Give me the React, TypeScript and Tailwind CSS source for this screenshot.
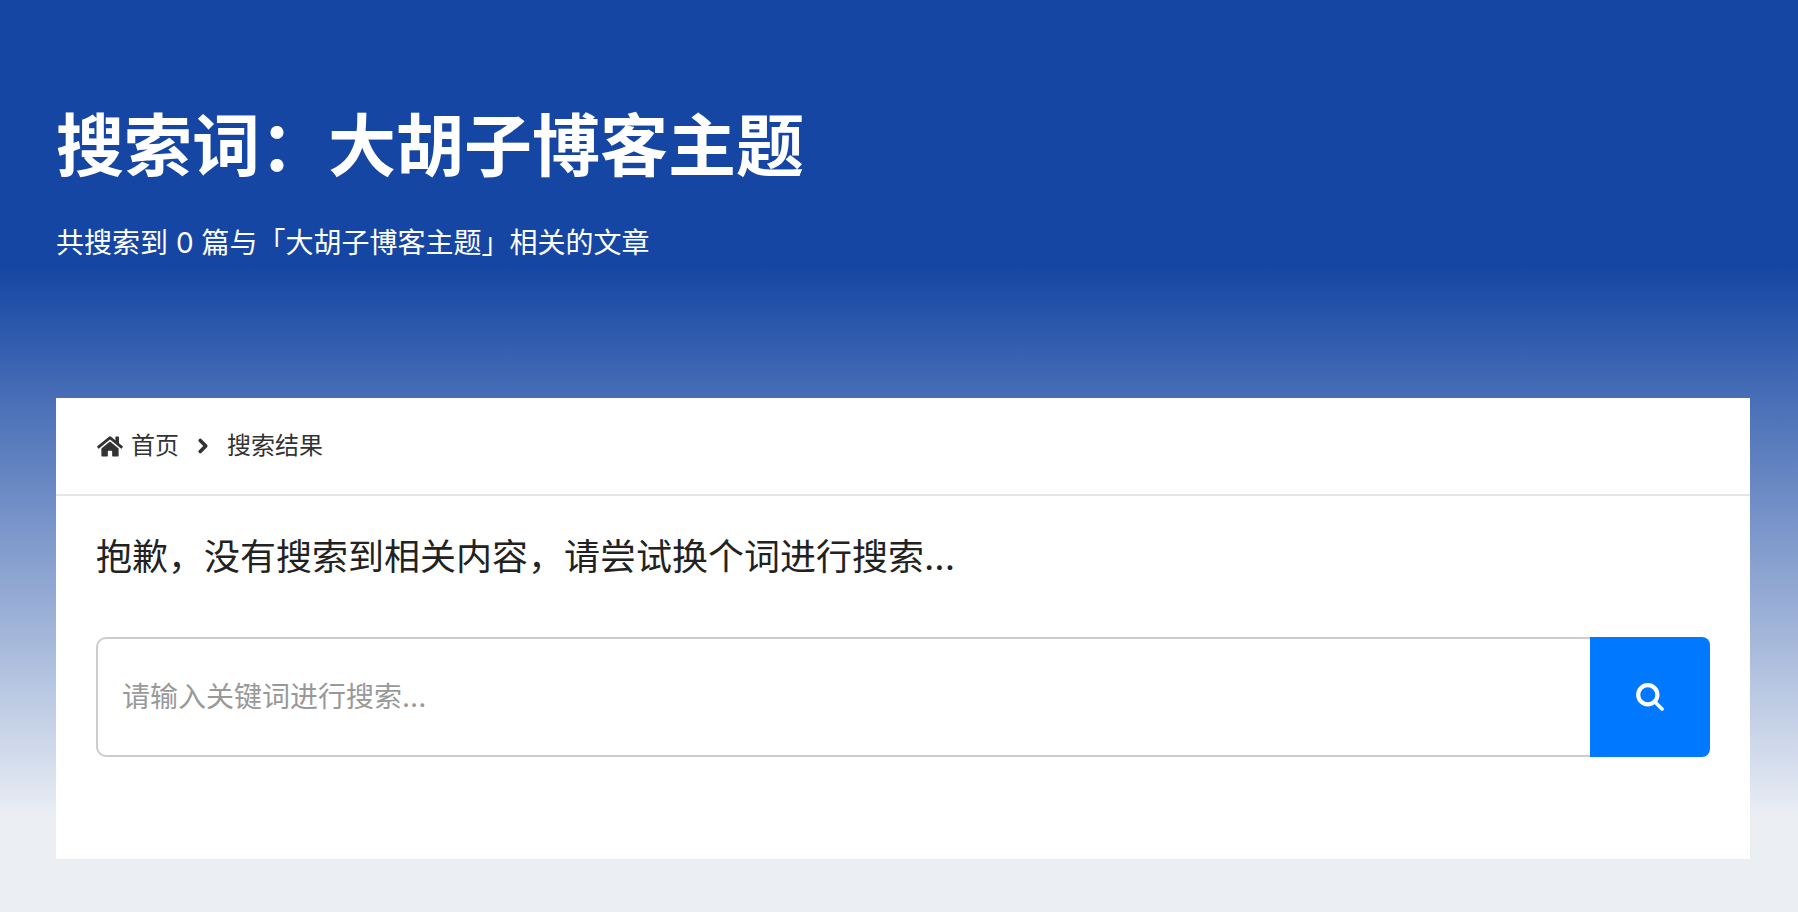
import React from 'react';
import { ChevronRight } from 'lucide-react';

const HomeIcon = () => (
  <svg viewBox="0 0 576 512" className="w-[26px] h-[23px] ml-[1px] fill-[#333]">
    <path d="M280.37 148.26L96 300.11V464a16 16 0 0 0 16 16l112.06-.29a16 16 0 0 0 15.92-16V368a16 16 0 0 1 16-16h64a16 16 0 0 1 16 16v95.64a16 16 0 0 0 16 16.05L464 480a16 16 0 0 0 16-16V300L295.67 148.26a12.19 12.19 0 0 0-15.3 0zM571.6 251.47L488 182.56V44.05a12 12 0 0 0-12-12h-56a12 12 0 0 0-12 12v72.61L318.47 43a48 48 0 0 0-61 0L4.34 251.47a12 12 0 0 0-1.6 16.9l25.5 31A12 12 0 0 0 45.15 301l235.22-193.74a12.19 12.19 0 0 1 15.3 0L530.9 301a12 12 0 0 0 16.9-1.6l25.5-31a12 12 0 0 0-1.7-16.93z" />
  </svg>
);

const SearchIcon = () => (
  <svg viewBox="0 0 28 28" fill="none" stroke="white" strokeLinecap="round" className="w-[28px] h-[28px]">
    <circle cx="11.8" cy="11.8" r="9.6" strokeWidth="4.2" />
    <path d="M19.5 19.5L26 26" strokeWidth="3.6" />
  </svg>
);

export default function App() {
  return (
    <div
      className="min-h-[912px] pl-[56px] pr-[48px] pt-[103px] bg-[linear-gradient(to_bottom,#1546a3_268px,#e6ebf3_807px,#ebeff4_815px)] font-['Inter','Noto_Sans_CJK_SC',sans-serif]"
    >
      <h1 className="text-[68px] leading-[86px] font-bold text-white">{'搜索词\uFF1A大胡子博客主题'}</h1>
      <p className="mt-[34px] text-[28px] leading-[40px] text-white">共搜索到 0 篇与「大胡子博客主题」相关的文章</p>

      <div className="mt-[135px] bg-white h-[461px]">
        <div className="flex items-center h-[98px] px-[40px] border-b-2 border-[#e5e5e5] text-[24px] text-[#333]">
          <HomeIcon />
          <span className="ml-[8px]">首页</span>
          <ChevronRight className="w-[22px] h-[22px] ml-[13px] mr-[13px] text-[#333]" strokeWidth={4} />
          <span>搜索结果</span>
        </div>
        <div className="px-[40px] pt-[36px]">
          <p className="text-[36px] leading-[50px] text-[#222]">{'抱歉\uFF0C没有搜索到相关内容\uFF0C请尝试换个词进行搜索...'}</p>
          <div className="flex mt-[55px] h-[120px]">
            <input
              placeholder="请输入关键词进行搜索..."
              className="flex-1 min-w-0 pl-[24px] text-[28px] border-2 border-r-0 border-[#ccc] rounded-l-[10px] placeholder:text-[#999] outline-none"
            />
            <button className="w-[120px] flex items-center justify-center bg-[#0078ff] rounded-r-[8px]">
              <SearchIcon />
            </button>
          </div>
        </div>
      </div>
    </div>
  );
}
